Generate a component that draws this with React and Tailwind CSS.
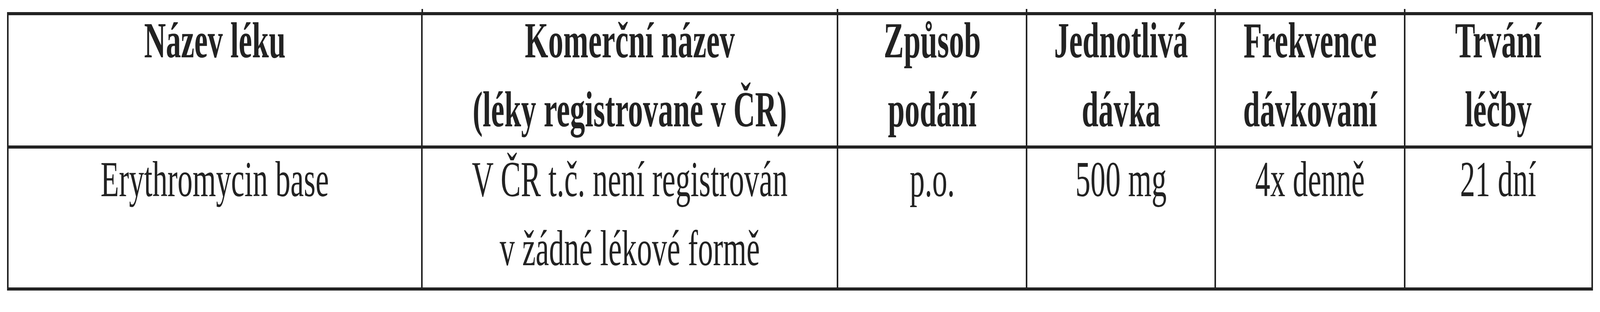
// The table is measured on a 6905px wide frame: horizontal sizes are in vw,
// vertical ones in px, and the text is squeezed to the same width ratio.
const cols = 'grid-cols-[minmax(0,1779fr)_minmax(0,1793fr)_minmax(0,816fr)_minmax(0,814fr)_minmax(0,817fr)_minmax(0,808fr)]';

const header = [
    ['Název léku'],
    ['Komerční název', '(léky registrované v ČR)'],
    ['Způsob', 'podání'],
    ['Jednotlivá', 'dávka'],
    ['Frekvence', 'dávkovaní'],
    ['Trvání', 'léčby'],
];

const body = [
    ['Erythromycin base'],
    ['V ČR t.č. není registrován', 'v žádné lékové formě'],
    ['p.o.'],
    ['500 mg'],
    ['4x denně'],
    ['21 dní'],
];

function Cell({ lines, first, bold, shift, k }) {
    return (
        <div className={`flex justify-center min-w-0 ${first ? '' : 'border-l-[0.122vw] border-[#222]'}`}>
            <div
                className={`w-max shrink-0 text-center whitespace-nowrap ${shift} ${bold ? 'font-bold' : ''}`}
                style={{ transform: `scaleX(${k})` }}
            >
                {lines.map((l, i) => (
                    <div key={i}>{l}</div>
                ))}
            </div>
        </div>
    );
}

export default function App() {
    const k = typeof window !== 'undefined' ? window.innerWidth / 6905 : 1;

    return (
        <div className="bg-white h-[800px] overflow-hidden pl-[0.449vw] pt-[23px] text-[#222] font-['Liberation_Serif','Times_New_Roman',serif] text-[130px] leading-[177px]">
            {/* column rules poke out above the top border */}
            <div className={`grid ${cols} h-[8px] ml-[0.122vw] w-[98.87vw]`}>
                {header.map((_, i) => (
                    <div key={i} className={i === 0 ? '' : 'border-l-[0.122vw] border-[#222]'} />
                ))}
            </div>

            <div className="w-[99.1vw] border-y-[8px] border-x-[0.122vw] border-[#222]">
                {/* header row */}
                <div className={`grid ${cols} h-[334px]`}>
                    {header.map((lines, i) => (
                        <Cell key={i} k={k} lines={lines} first={i === 0} bold shift="-mt-[24px]" />
                    ))}
                </div>

                {/* body row */}
                <div className={`grid ${cols} h-[364px] border-t-[8px] border-[#222]`}>
                    {body.map((lines, i) => (
                        <Cell key={i} k={k} lines={lines} first={i === 0} shift="-mt-[10px]" />
                    ))}
                </div>
            </div>
        </div>
    );
}
